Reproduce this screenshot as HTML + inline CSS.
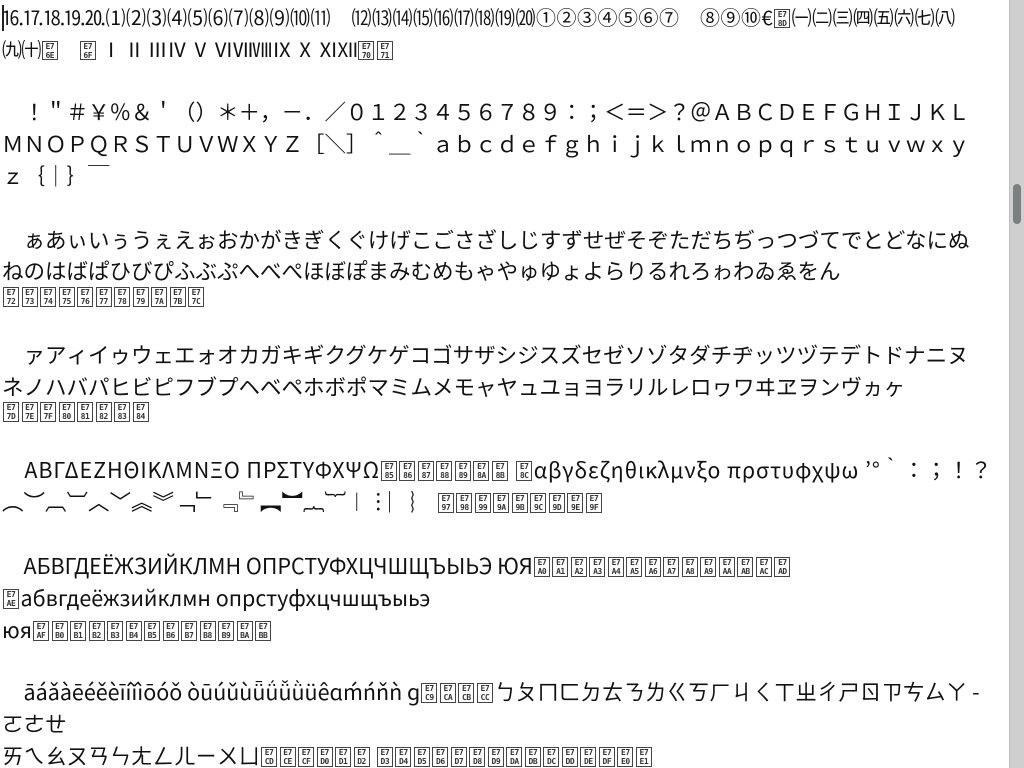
<!DOCTYPE html>
<html><head><meta charset="utf-8">
<style>
html,body{margin:0;padding:0;background:#fff;overflow:hidden;}
body{width:1024px;height:768px;position:relative;font-family:"Liberation Sans","Noto Sans CJK JP",sans-serif;}
.l{position:absolute;left:2px;white-space:nowrap;font-family:"Noto Sans CJK JP",sans-serif;font-size:21.5px;line-height:32px;color:#111;}
.c{font-size:20px;letter-spacing:0.5px;}
i{display:inline-block;width:16px;height:20px;border:1px solid #444;box-sizing:border-box;font:bold 8px/8.5px "DejaVu Sans Mono",monospace;font-style:normal;text-align:center;vertical-align:-3px;margin:0 1.5px 0 1px;color:#333;padding-top:1px;overflow:hidden;letter-spacing:-0.5px;}
.c i{height:19px;}
#sb{position:absolute;left:1009px;top:0;width:15px;height:768px;background:#cfcfcf;border-left:1px solid #bdbdbd;box-sizing:border-box;}
#th{position:absolute;left:1013px;top:184px;width:8px;height:40px;background:#7b7f7f;border-radius:4px;}
#cur{position:absolute;left:2px;top:5px;width:2px;height:26px;background:#222;}
.g{letter-spacing:0.9px;}
</style></head><body>
<div id="cur"></div>
<div class="l c" style="top:1px;left:3px">⒗⒘⒙⒚⒛⑴⑵⑶⑷⑸⑹⑺⑻⑼⑽⑾　⑿⒀⒁⒂⒃⒄⒅⒆⒇①②③④⑤⑥⑦　⑧⑨⑩€<i>E7<br>8D</i>㈠㈡㈢㈣㈤㈥㈦㈧</div>
<div class="l c" style="top:33px;letter-spacing:-0.6px">㈨㈩<i>E7<br>6E</i>　<i>E7<br>6F</i> Ⅰ Ⅱ ⅢⅣ Ⅴ ⅥⅦⅧⅨ Ⅹ ⅪⅫ<i>E7<br>70</i><i>E7<br>71</i></div>
<div class="l" style="top:96px">　！＂＃￥％＆＇（）＊＋，－．／０１２３４５６７８９：；＜＝＞？＠ＡＢＣＤＥＦＧＨＩＪＫＬ</div>
<div class="l" style="top:128px">ＭＮＯＰＱＲＳＴＵＶＷＸＹＺ［＼］＾＿｀ａｂｃｄｅｆｇｈｉｊｋｌｍｎｏｐｑｒｓｔｕｖｗｘｙ</div>
<div class="l" style="top:160px">ｚ｛｜｝￣</div>
<div class="l" style="top:224px">　ぁあぃいぅうぇえぉおかがきぎくぐけげこごさざしじすずせぜそぞただちぢっつづてでとどなにぬ</div>
<div class="l" style="top:255px">ねのはばぱひびぴふぶぷへべぺほぼぽまみむめもゃやゅゆょよらりるれろゎわゐゑをん</div>
<div class="l" style="top:280px"><i>E7<br>72</i><i>E7<br>73</i><i>E7<br>74</i><i>E7<br>75</i><i>E7<br>76</i><i>E7<br>77</i><i>E7<br>78</i><i>E7<br>79</i><i>E7<br>7A</i><i>E7<br>7B</i><i>E7<br>7C</i></div>
<div class="l" style="top:339px">　ァアィイゥウェエォオカガキギクグケゲコゴサザシジスズセゼソゾタダチヂッツヅテデトドナニヌ</div>
<div class="l" style="top:371px">ネノハバパヒビピフブプヘベペホボポマミムメモャヤュユョヨラリルレロヮワヰヱヲンヴヵヶ</div>
<div class="l" style="top:395px"><i>E7<br>7D</i><i>E7<br>7E</i><i>E7<br>7F</i><i>E7<br>80</i><i>E7<br>81</i><i>E7<br>82</i><i>E7<br>83</i><i>E7<br>84</i></div>
<div class="l g" style="top:454px">　ΑΒΓΔΕΖΗΘΙΚΛΜΝΞΟ ΠΡΣΤΥΦΧΨΩ<i>E7<br>85</i><i>E7<br>86</i><i>E7<br>87</i><i>E7<br>88</i><i>E7<br>89</i><i>E7<br>8A</i><i>E7<br>8B</i> <i>E7<br>8C</i>αβγδεζηθικλμνξο πρστυφχψω ’°｀：；！？</div>
<div class="l" style="top:486px">︵︶︹︺︿﹀︽︾﹁﹂﹃﹄︻︼︷︸︱︙︳︴ <i>E7<br>97</i><i>E7<br>98</i><i>E7<br>99</i><i>E7<br>9A</i><i>E7<br>9B</i><i>E7<br>9C</i><i>E7<br>9D</i><i>E7<br>9E</i><i>E7<br>9F</i></div>
<div class="l" style="top:550px">　АБВГДЕЁЖЗИЙКЛМН ОПРСТУФХЦЧШЩЪЫЬЭ ЮЯ<i>E7<br>A0</i><i>E7<br>A1</i><i>E7<br>A2</i><i>E7<br>A3</i><i>E7<br>A4</i><i>E7<br>A5</i><i>E7<br>A6</i><i>E7<br>A7</i><i>E7<br>A8</i><i>E7<br>A9</i><i>E7<br>AA</i><i>E7<br>AB</i><i>E7<br>AC</i><i>E7<br>AD</i></div>
<div class="l" style="top:582px"><i>E7<br>AE</i>абвгдеёжзийклмн опрстуфхцчшщъыьэ</div>
<div class="l" style="top:614px">юя<i>E7<br>AF</i><i>E7<br>B0</i><i>E7<br>B1</i><i>E7<br>B2</i><i>E7<br>B3</i><i>E7<br>B4</i><i>E7<br>B5</i><i>E7<br>B6</i><i>E7<br>B7</i><i>E7<br>B8</i><i>E7<br>B9</i><i>E7<br>BA</i><i>E7<br>BB</i></div>
<div class="l" style="top:676px">　āáǎàēéěèīíǐìōóǒ òūúǔùǖǘǚǜüêɑḿńňǹ ɡ<i>E7<br>C9</i><i>E7<br>CA</i><i>E7<br>CB</i><i>E7<br>CC</i>ㄅㄆㄇㄈㄉㄊㄋㄌㄍㄎㄏㄐㄑㄒㄓㄔㄕㄖㄗㄘㄙㄚ -</div>
<div class="l" style="top:708px">ㄛㄜㄝ</div>
<div class="l" style="top:740px">ㄞㄟㄠㄡㄢㄣㄤㄥㄦㄧㄨㄩ<i>E7<br>CD</i><i>E7<br>CE</i><i>E7<br>CF</i><i>E7<br>D0</i><i>E7<br>D1</i><i>E7<br>D2</i> <i>E7<br>D3</i><i>E7<br>D4</i><i>E7<br>D5</i><i>E7<br>D6</i><i>E7<br>D7</i><i>E7<br>D8</i><i>E7<br>D9</i><i>E7<br>DA</i><i>E7<br>DB</i><i>E7<br>DC</i><i>E7<br>DD</i><i>E7<br>DE</i><i>E7<br>DF</i><i>E7<br>E0</i><i>E7<br>E1</i></div>
<div id="sb"></div><div id="th"></div>
</body></html>
